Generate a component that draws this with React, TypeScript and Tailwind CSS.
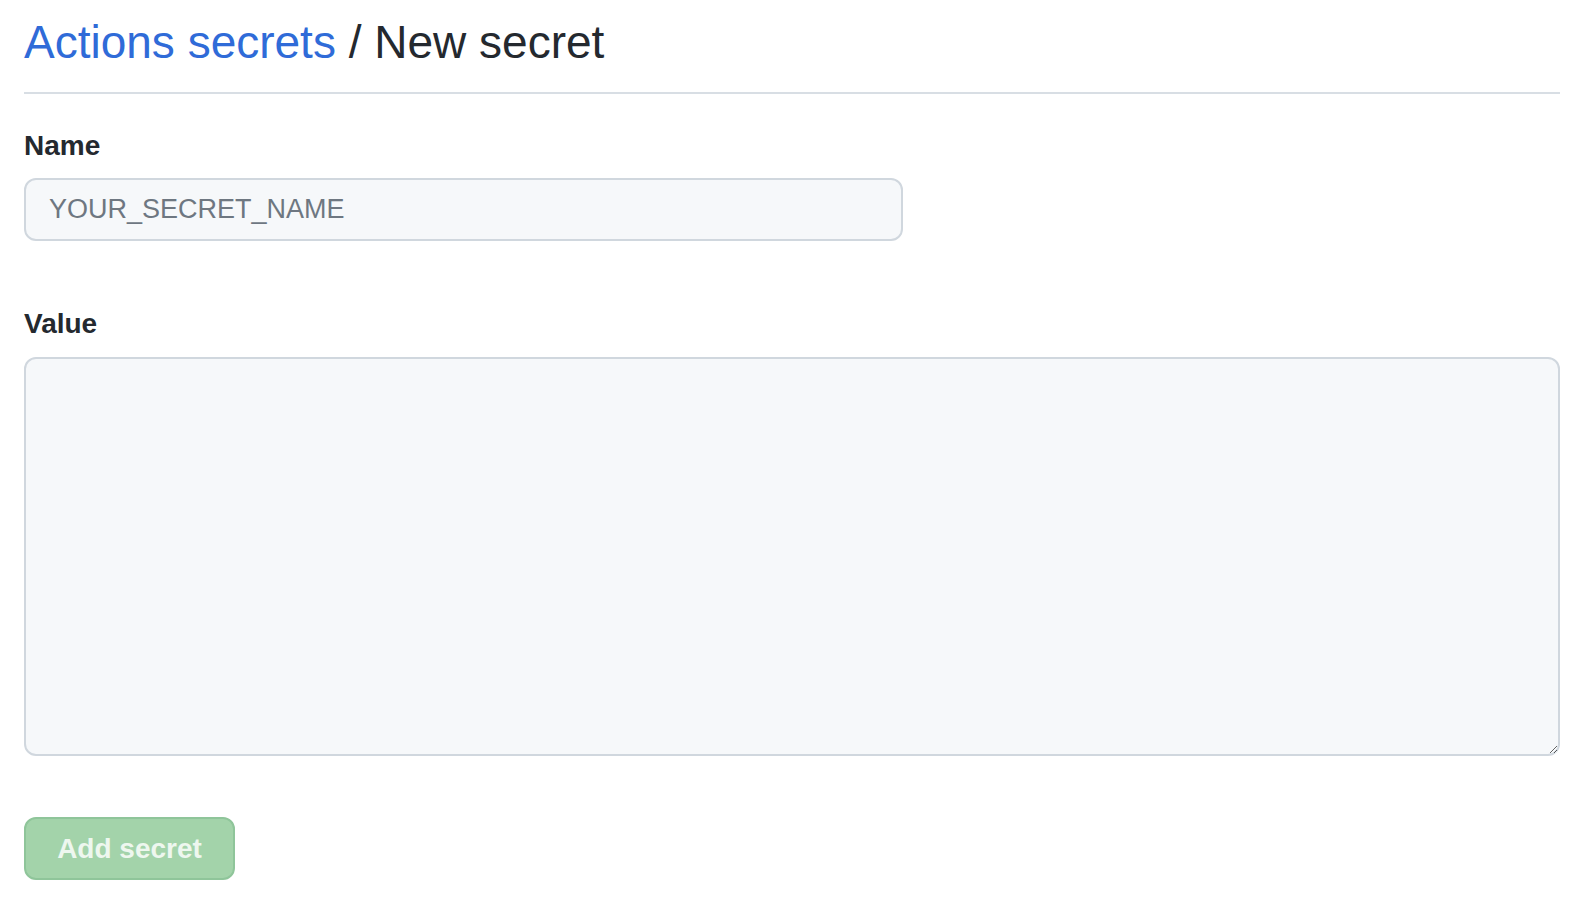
import React from 'react';

export default function App() {
  return (
    <div className="min-h-screen bg-white pl-[24px] pr-[30px] pt-[7px] font-['Liberation_Sans',Arial,sans-serif] text-[#24292f]">
      <h1 className="border-b-2 border-[#d8dee4] pb-[15px] text-[46px] font-normal leading-[70px]">
        <a href="#" className="text-[#2f6bd8]">Actions secrets</a>
        <span> / New secret</span>
      </h1>

      <form className="flex flex-col" onSubmit={(e) => e.preventDefault()}>
        <label htmlFor="secret_name" className="mt-[34px] text-[28px] font-bold leading-[36px]">
          Name
        </label>
        <input
          id="secret_name"
          type="text"
          placeholder="YOUR_SECRET_NAME"
          className="mt-[14px] h-[63px] w-[879px] rounded-[12px] border-2 border-[#d0d7de] bg-[#f6f8fa] px-[23px] text-[27px] text-[#24292f] outline-none placeholder:text-[#6e7781]"
        />

        <label htmlFor="secret_value" className="mt-[65px] text-[28px] font-bold leading-[36px]">
          Value
        </label>
        <textarea
          id="secret_value"
          className="mt-[15px] h-[399px] w-full resize-y rounded-[12px] border-2 border-[#d0d7de] bg-[#f6f8fa] px-[23px] py-[14px] text-[27px] outline-none"
        />

        <div className="mt-[61px]">
          <button
            type="submit"
            disabled
            className="h-[63px] w-[211px] rounded-[12px] border-2 border-[#8fc59a] bg-[#a3d3aa] text-[28px] font-bold text-[#eef7ef]"
          >
            Add secret
          </button>
        </div>
      </form>
    </div>
  );
}
